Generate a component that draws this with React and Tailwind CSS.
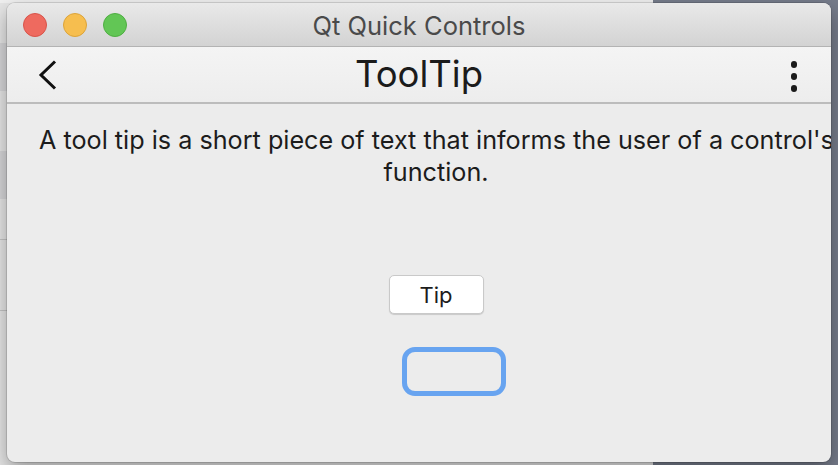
import React from "react";

const TrafficLight = ({ color, ring }) => (
  <span
    className={`block w-[24px] h-[24px] rounded-full border ${color} ${ring}`}
  />
);

const App = () => {
  return (
    <div className="relative w-[838px] h-[465px] overflow-hidden bg-[#767c8b] font-['Inter','Liberation_Sans',sans-serif]">
      {/* window behind */}
      <div className="absolute left-0 top-0 w-[653px] h-[465px] bg-[#e6e6e6]">
        <div className="h-[3px] bg-[#f0f0f0]" />
        <div className="mt-[40px] h-[48px] bg-[#d6d6d8]" />
        <div className="mt-[60px] h-[48px] bg-[#d6d6d8]" />
        <div className="mt-[40px] border-t border-[#c4c4c4]" />
        <div className="mt-[70px] border-t border-[#c4c4c4]" />
      </div>

      {/* main window */}
      <div className="absolute left-[7px] top-[3px] w-[824px] h-[459px] rounded-[8px] overflow-hidden bg-[#ececec] shadow-[0_0_0_1px_rgba(0,0,0,0.12),0_8px_20px_rgba(0,0,0,0.35)] flex flex-col">
        {/* title bar */}
        <div className="relative h-[44px] shrink-0 bg-gradient-to-b from-[#e9e9e9] to-[#d3d3d3] border-b border-[#b3b3b3] flex items-center justify-center">
          <div className="absolute left-[16px] top-[10px] flex gap-[16px]">
            <TrafficLight color="bg-[#ee6a5f]" ring="border-[#d8544a]" />
            <TrafficLight color="bg-[#f6be4f]" ring="border-[#dca43a]" />
            <TrafficLight color="bg-[#62c655]" ring="border-[#4fae42]" />
          </div>
          <span className="pt-[2px] text-[25.5px] text-[#4a4a4a] leading-none">
            Qt Quick Controls
          </span>
        </div>

        {/* tool bar */}
        <div className="relative h-[57px] shrink-0 bg-gradient-to-b from-[#f4f4f4] to-[#ededed] border-b-2 border-[#bcbcbc] flex items-center justify-center">
          <svg
            className="absolute left-[31px] top-[13px]"
            width="20"
            height="30"
            viewBox="0 0 20 30"
          >
            <path
              d="M17 1.5 L3 15 L17 28.5"
              fill="none"
              stroke="#111"
              strokeWidth="3"
            />
          </svg>
          <span className="text-[36.5px] text-[#1b1b1b] leading-none">
            ToolTip
          </span>
          <div className="absolute right-[34px] top-[14px] flex flex-col gap-[5.5px]">
            <span className="block w-[6.5px] h-[6.5px] rounded-full bg-[#1a1a1a]" />
            <span className="block w-[6.5px] h-[6.5px] rounded-full bg-[#1a1a1a]" />
            <span className="block w-[6.5px] h-[6.5px] rounded-full bg-[#1a1a1a]" />
          </div>
        </div>

        {/* content */}
        <div className="ml-[32px] w-[794px] flex-1 flex flex-col items-center">
          <p className="mt-[20px] w-full whitespace-nowrap text-center text-[25.2px] leading-[32px] text-[#1c1c1c]">
            A tool tip is a short piece of text that informs the user of a
            control's
            <br />
            function.
          </p>

          <button className="mt-[87px] w-[95px] h-[39px] rounded-[5px] bg-white border border-[#c9c9c9] shadow-[0_1px_1px_rgba(0,0,0,0.15)] text-[22px] text-[#1c1c1c] leading-none">
            Tip
          </button>

          <div className="mt-[33px] ml-[36px] w-[104px] h-[49px] rounded-[13px] border-[5px] border-[#68a4f0]" />
        </div>
      </div>
    </div>
  );
};

export default App;
